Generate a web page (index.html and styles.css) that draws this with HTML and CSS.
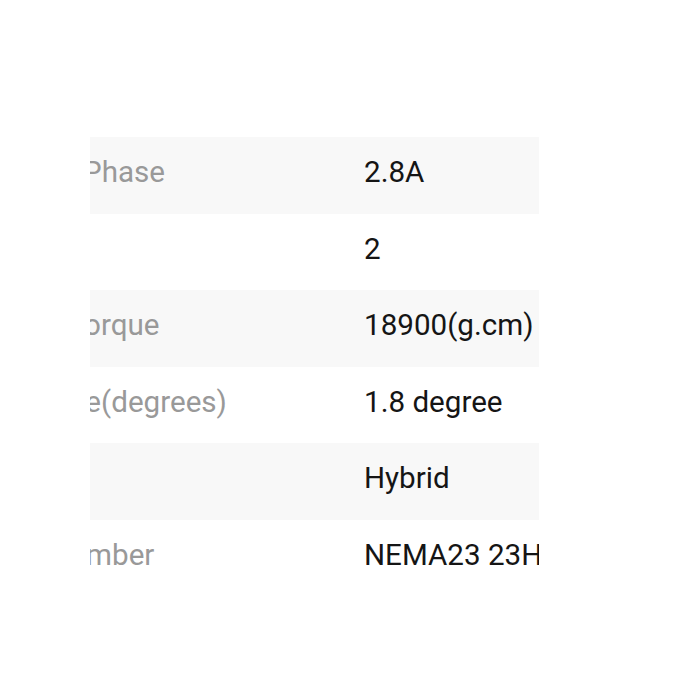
FILE: index.html
```html
<!DOCTYPE html>
<html>
<head>
<meta charset="utf-8">
<link rel="stylesheet" href="styles.css">
</head>
<body>
<div class="clip">
  <div class="table">
    <div class="row"><div class="label">Current / Phase</div><div class="value">2.8A</div></div>
    <div class="row"><div class="label">Phase</div><div class="value">2</div></div>
    <div class="row"><div class="label">Holding Torque</div><div class="value">18900(g.cm)</div></div>
    <div class="row"><div class="label">Step Angle(degrees)</div><div class="value">1.8 degree</div></div>
    <div class="row"><div class="label">Type</div><div class="value">Hybrid</div></div>
    <div class="row"><div class="label">Model Number</div><div class="value">NEMA23 23HS8430</div></div>
  </div>
</div>
</body>
</html>
```

FILE: styles.css
```css
html, body {
  margin: 0;
  padding: 0;
  background: #ffffff;
}
body {
  font-family: Roboto, "Liberation Sans", sans-serif;
  font-size: 29.6px;
}
.clip {
  margin: 137px 0 0 90px;
  width: 449px;
  overflow: hidden;
}
.table {
  margin-left: -140px;
  width: 760px;
}
.row {
  display: grid;
  grid-template-columns: 414px 1fr;
  align-items: center;
  height: 76.5px;
  padding-bottom: 6px;
  box-sizing: border-box;
}
.row:nth-child(odd) {
  background: #f8f8f8;
}
.label {
  padding-left: 9px;
  color: #999999;
  white-space: nowrap;
}
.value {
  color: #151515;
  white-space: nowrap;
}
```
